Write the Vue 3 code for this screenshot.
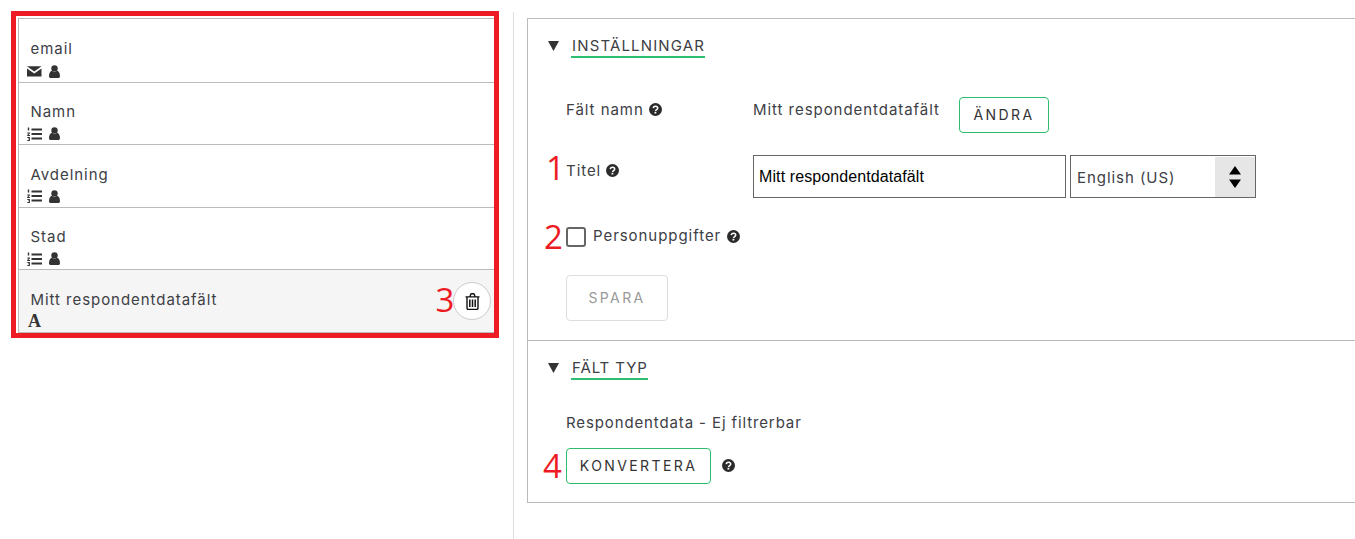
<script setup>
const items = [
  { name: 'email', type: 'mail' },
  { name: 'Namn', type: 'list' },
  { name: 'Avdelning', type: 'list' },
  { name: 'Stad', type: 'list' },
  { name: 'Mitt respondentdatafält', type: 'font', selected: true }
]
</script>

<template>
  <div class="page">
    <aside class="left">
      <div class="redbox">
        <ul class="list">
          <li v-for="it in items" :key="it.name" class="item" :class="{ selected: it.selected }">
            <div class="item-name">{{ it.name }}</div>
            <div class="item-icons">
              <svg v-if="it.type === 'mail'" class="ic-type" width="15" height="12" viewBox="0 0 15 12">
                <path d="M0 1.200h14.500L7.250 6.600z" fill="#333" />
                <path d="M0 3.600l7.250 5 7.250-5V11.500H0z" fill="#333" />
              </svg>
              <svg v-if="it.type === 'list'" class="ic-type" width="15" height="14" viewBox="0 0 15 14">
                <path d="M4.500 1.500h10.500v2H4.500zM4.500 6h10.500v2H4.500zM4.500 10.500h10.500v2H4.500z" fill="#333" />
                <path d="M.8.400h1.400v3.200H.8zM.3 5.500h2.600v1L1.500 8h1.500v.9H.2v-1l1.500-1.400H.3zM.3 10h2.600v3.900H.3v-.8h1.700v-.8H1v-.7h1v-.7H.3z" fill="#333" />
              </svg>
              <span v-if="it.type === 'font'" class="ic-font">A</span>
              <svg v-if="it.type !== 'font'" class="ic-user" width="11" height="13" viewBox="0 0 11 13">
                <circle cx="5.500" cy="3.400" r="3.200" fill="#333" />
                <path d="M0 11.200C0 8 1.300 6.200 3 5.800c1.500 1.200 3.500 1.200 5 0 1.700.4 3 2.200 3 5.400 0 1.200-.8 1.800-1.800 1.800H1.800C.8 13 0 12.400 0 11.200z" fill="#333" />
              </svg>
            </div>
            <button v-if="it.selected" class="trash" type="button" aria-label="Ta bort">
              <svg width="15" height="17" viewBox="0 0 15 17" fill="none" stroke="#111" stroke-width="1.400">
                <path d="M.5 3.900h14M2 3.900V15c0 .8.500 1.400 1.200 1.400h8.600c.7 0 1.200-.6 1.200-1.400V3.900M4.800 3.900l.9-2.300c.1-.4.500-.9 1-.9h1.600c.5 0 .9.500 1 .9l.9 2.300" />
                <path d="M4.800 6.500v7.500M7.500 6.500v7.500M10.200 6.500v7.500" stroke-width="1.500" />
              </svg>
            </button>
          </li>
        </ul>
      </div>
    </aside>

    <div class="divider"></div>

    <main class="panel">
      <section class="section first">
        <header class="head">
          <svg class="tri" width="11" height="10" viewBox="0 0 11 10"><path d="M0 0h11L5.500 10z" fill="#333" /></svg>
          <span class="title">INSTÄLLNINGAR</span>
        </header>

        <div class="row row-name">
          <div class="label">Fält namn
            <svg class="help" width="13" height="13" viewBox="0 0 13 13"><circle cx="6.500" cy="6.500" r="6.500" fill="#2b2b2b" /><path d="M4.300 5.100c.1-1.300 1-1.900 2.200-1.900 1.300 0 2.200.7 2.200 1.800 0 1.600-2.100 1.500-2.100 3" fill="none" stroke="#fff" stroke-width="1.500" /><rect x="5.500" y="8.800" width="1.800" height="1.700" fill="#fff" /></svg>
          </div>
          <div class="value">Mitt respondentdatafält</div>
          <button class="btn green andra" type="button">ÄNDRA</button>
        </div>

        <div class="row row-title">
          <div class="label">Titel
            <svg class="help" width="13" height="13" viewBox="0 0 13 13"><circle cx="6.500" cy="6.500" r="6.500" fill="#2b2b2b" /><path d="M4.300 5.100c.1-1.300 1-1.900 2.200-1.900 1.300 0 2.200.7 2.200 1.800 0 1.600-2.100 1.500-2.100 3" fill="none" stroke="#fff" stroke-width="1.500" /><rect x="5.500" y="8.800" width="1.800" height="1.700" fill="#fff" /></svg>
          </div>
          <input class="input" type="text" value="Mitt respondentdatafält" />
          <div class="select">
            <span class="select-text">English (US)</span>
            <span class="select-arrows">
              <svg width="12" height="22" viewBox="0 0 12 22"><path d="M6 0L12 8.500H0zM0 13.500h12L6 22z" fill="#000" /></svg>
            </span>
          </div>
          <span class="mark m1">1</span>
        </div>

        <div class="row-check">
          <span class="check"></span>
          <span class="check-label">Personuppgifter</span>
          <svg class="help" width="13" height="13" viewBox="0 0 13 13"><circle cx="6.500" cy="6.500" r="6.500" fill="#2b2b2b" /><path d="M4.300 5.100c.1-1.300 1-1.900 2.200-1.900 1.300 0 2.200.7 2.200 1.800 0 1.600-2.100 1.500-2.100 3" fill="none" stroke="#fff" stroke-width="1.500" /><rect x="5.500" y="8.800" width="1.800" height="1.700" fill="#fff" /></svg>
          <span class="mark m2">2</span>
        </div>

        <button class="btn spara" type="button">SPARA</button>
      </section>

      <section class="section second">
        <header class="head">
          <svg class="tri" width="11" height="10" viewBox="0 0 11 10"><path d="M0 0h11L5.500 10z" fill="#333" /></svg>
          <span class="title short">FÄLT TYP</span>
        </header>
        <div class="resp">Respondentdata - Ej filtrerbar</div>
        <div class="row-conv">
          <button class="btn green konv" type="button">KONVERTERA</button>
          <svg class="help" width="13" height="13" viewBox="0 0 13 13"><circle cx="6.500" cy="6.500" r="6.500" fill="#2b2b2b" /><path d="M4.300 5.100c.1-1.300 1-1.900 2.200-1.900 1.300 0 2.200.7 2.200 1.800 0 1.600-2.100 1.500-2.100 3" fill="none" stroke="#fff" stroke-width="1.500" /><rect x="5.500" y="8.800" width="1.800" height="1.700" fill="#fff" /></svg>
          <span class="mark m4">4</span>
        </div>
      </section>
    </main>

    <span class="mark m3">3</span>
  </div>
</template>

<style>
html, body { margin: 0; background: #fff; overflow: hidden; }
</style>

<style scoped>
.page {
  position: relative;
  display: flex;
  width: 1355px;
  height: 539px;
  overflow: hidden;
  background: #fff;
  color: #3d4045;
  font-family: Inter, "Liberation Sans", sans-serif;
  font-size: 15px;
  letter-spacing: 0.95px;
}
.left { width: 513px; flex: none; padding: 11px 0 0 11px; box-sizing: border-box; }
.redbox {
  width: 488px;
  height: 327px;
  box-sizing: border-box;
  border: 5px solid #ed1c24;
  padding: 2px 0 0 2px;
}
.list {
  list-style: none;
  margin: 0;
  padding: 1px 0 0;
  border-top: 1px solid #bbb;
  border-left: 1px solid #bbb;
}
.item {
  position: relative;
  height: 62.6px;
  box-sizing: border-box;
  border-bottom: 1px solid #bbb;
  padding: 20.45px 0 0 11.5px;
}
.item.selected { background: #f5f5f5; }
.item-name { line-height: 18px; height: 18px; }
.item-icons {
  display: flex;
  align-items: center;
  gap: 7px;
  margin: 5.65px 0 0 -3.5px;
  height: 14px;
}
.ic-type { flex: none; }
.ic-font {
  font-family: "Liberation Serif", serif;
  font-weight: 700;
  font-size: 18px;
  letter-spacing: 0;
  line-height: 14px;
  color: #333;
  margin-left: 1px;
}
.trash {
  position: absolute;
  right: 3px;
  top: 12px;
  width: 38px;
  height: 38px;
  padding: 0;
  border: 1px solid #ccc;
  border-radius: 50%;
  background: #fff;
  display: flex;
  align-items: center;
  justify-content: center;
}
.divider { width: 1px; margin-top: 12px; background: #ddd; flex: none; }
.panel {
  flex: none;
  width: 900px;
  height: 485px;
  margin: 18px 0 0 13px;
  box-sizing: border-box;
  border: 1px solid #bbb;
}
.section { position: relative; box-sizing: border-box; padding: 15px 0 0 38px; }
.section.first { height: 322px; border-bottom: 1px solid #bbb; }
.head {
  display: flex;
  align-items: flex-start;
  height: 24px;
  margin-left: -18px;
}
.tri { margin-top: 7px; flex: none; }
.title {
  margin-left: 12px;
  padding: 1px 0 0 1px;
  line-height: 21px;
  height: 21px;
  border-bottom: 2px solid #2dbd6e;
  font-size: 15px;
  letter-spacing: 1.15px;
}
.title.short { letter-spacing: 0.9px; }
.row { position: relative; display: flex; }
.row-name { margin-top: 39px; height: 36px; }
.row-name .label { width: 187px; line-height: 26px; }
.row-name .value { width: 206px; line-height: 26px; }
.label { flex: none; }
.help { vertical-align: -1px; flex: none; }
.btn {
  font-family: Inter, "Liberation Sans", sans-serif;
  font-size: 14px;
  letter-spacing: 2.4px;
  background: #fff;
  border-radius: 4px;
  padding: 0 0 2px;
  box-sizing: border-box;
  color: #333;
}
.btn.green { border: 1px solid #2dbd6e; }
.andra { width: 90px; height: 36px; flex: none; }
.row-title { margin-top: 22px; height: 43px; }
.row-title .label { width: 187px; line-height: 32px; }
.input {
  width: 313px;
  height: 43px;
  box-sizing: border-box;
  border: 1px solid #666;
  padding: 0 5px;
  font-family: "Liberation Sans", Arial, sans-serif;
  font-size: 16px;
  letter-spacing: 0.1px;
  color: #000;
  background: #fff;
  outline: none;
  border-radius: 0;
}
.select {
  display: flex;
  width: 186px;
  height: 43px;
  margin-left: 4px;
  box-sizing: border-box;
  border: 1px solid #666;
}
.select-text { flex: 1; padding-left: 6px; line-height: 43px; }
.select-arrows {
  width: 40px;
  margin: 1px 0 0;
  background: #e6e6e6;
  display: flex;
  align-items: center;
  justify-content: center;
}
.row-check {
  position: relative;
  display: flex;
  align-items: center;
  margin-top: 29px;
  height: 20px;
}
.check {
  width: 20px;
  height: 20px;
  box-sizing: border-box;
  border: 2px solid #666;
  border-radius: 3px;
  flex: none;
}
.check-label { margin-left: 7px; position: relative; top: -2px; }
.row-check .help { margin-left: 6px; position: relative; top: -1px; }
.spara {
  display: block;
  margin-top: 28px;
  width: 102px;
  height: 46px;
  border: 1px solid #ddd;
  color: #999;
}
.second { height: 160px; }
.resp { margin-top: 33px; line-height: 20px; height: 20px; letter-spacing: 0.88px; }
.row-conv { position: relative; display: flex; align-items: center; margin-top: 15px; height: 36px; }
.konv { width: 145px; height: 36px; flex: none; }
.row-conv .help { margin-left: 11px; margin-top: -1px; }
.mark {
  position: absolute;
  font-family: "Open Sans", sans-serif;
  font-size: 33px;
  line-height: 36px;
  letter-spacing: 0;
  color: #ed1c24;
  font-weight: 400;
}
.m1 { left: -20px; top: -5px; }
.m2 { left: -22px; top: -8px; }
.m3 { left: 435.500px; top: 282px; }
.m4 { left: -23px; top: 0; }
</style>
